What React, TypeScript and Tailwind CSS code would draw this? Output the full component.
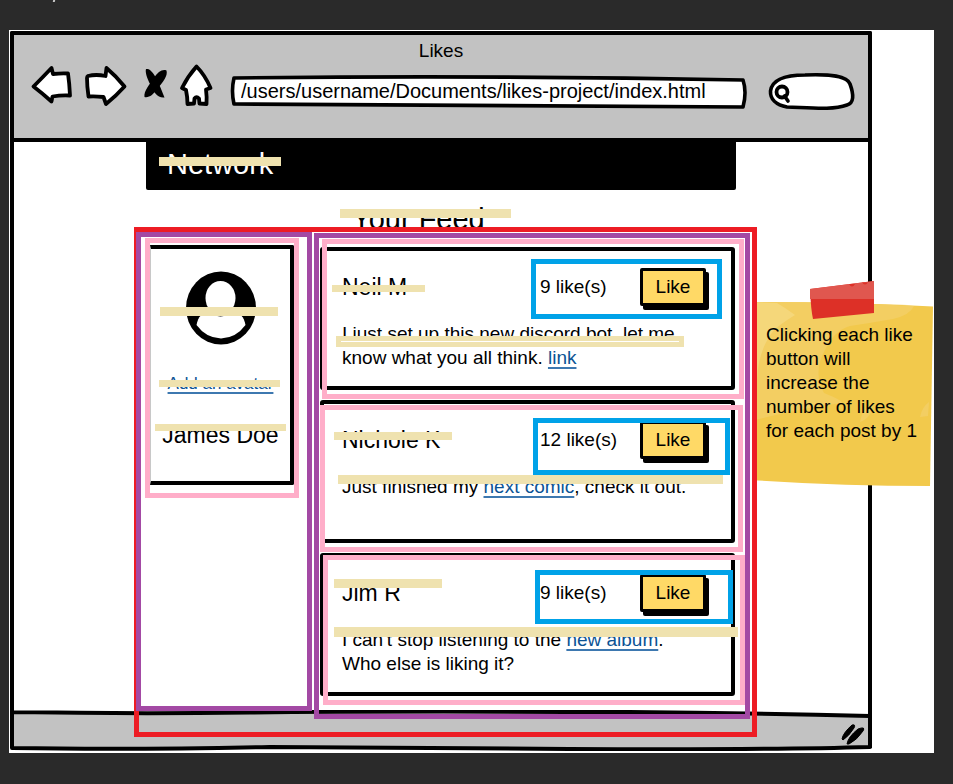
import { useState, type ReactNode } from "react";

const mark = "pointer-events-none absolute z-20 bg-[#efe2af]";
const frame = "pointer-events-none absolute z-20 border-[5px]";
const link = "text-[#0b5394] underline decoration-2 underline-offset-[3px] decoration-[#3d78b0]";

type PostProps = {
  name: string;
  likes: number;
  pinkFrame: string;
  blueFrame: string;
  nameMark: string;
  textMark: ReactNode;
  children: ReactNode;
};

function Post({ name, likes, pinkFrame, blueFrame, nameMark, textMark, children }: PostProps) {
  const [count, setCount] = useState(likes);
  return (
    <article className="relative h-[143px] rounded-[3px] border-4 border-black bg-white pt-[17px] pr-[25px] pl-[18px]">
      <div className="flex h-[38px] items-center">
        <h2 className="flex-1 text-[23px] leading-7">{name}</h2>
        <p className="w-[100px] text-[19px] leading-6">{count} like(s)</p>
        <button
          type="button"
          onClick={() => setCount(count + 1)}
          className="h-[38px] w-[66px] rounded-[2px] border-[3px] border-black bg-[#ffd966] text-[19px] leading-6 shadow-[3px_4px_0_#000]"
        >
          Like
        </button>
      </div>
      <p className="mt-4 text-[19px] leading-6">{children}</p>
      <div className={`${mark} ${nameMark}`} />
      {textMark}
      <div className={`${frame} border-[#ffaec9] ${pinkFrame}`} />
      <div className={`${frame} border-[#00a2e8] ${blueFrame}`} />
    </article>
  );
}

function Toolbar() {
  return (
    <header className="h-[107px] border-b-4 border-black bg-[#c2c2c2] pt-1">
      <p className="text-center text-[19px] leading-6">Likes</p>
      <div className="flex h-12 pr-[10px] pl-4">
        <button type="button" aria-label="Back" className="h-12 w-11">
          <svg viewBox="30 63 44 48" className="h-12 w-11" fill="#fff" stroke="#000" strokeWidth="3.8" strokeLinejoin="round">
            <path d="M33.5 86.5 Q43 77 51.5 68 L53 74 Q62 73 68 73.5 Q69.5 84 70 95.5 Q61 95 52.5 96.5 L51.5 101.5 Q42 93 33.5 86.5Z" />
          </svg>
        </button>
        <button type="button" aria-label="Forward" className="ml-[9px] h-12 w-11">
          <svg viewBox="83 63 44 48" className="h-12 w-11" fill="#fff" stroke="#000" strokeWidth="3.8" strokeLinejoin="round">
            <path d="M88 76 Q96 74 105.5 76 L106.5 68 Q116 76 124.5 86.5 Q116 96 106 104 L103.5 97 Q95 96 88.5 96.5 Q87 86 87 78 Q87 76.5 88 76Z" />
          </svg>
        </button>
        <button type="button" aria-label="Stop" className="ml-[15px] h-12 w-7">
          <svg viewBox="142 63 28 48" className="h-12 w-7">
            <path d="M146 69 C151 68 156 75 164.500 97.500 C158 98.500 153 92 150 84 C147 78 145 72 146 69Z" />
            <path d="M166.500 70.500 C168 76 163 82 158 88 C153 95 149 98 144.500 97 C143.500 91 150 84 154 78 C158 72 162 69 166.500 70.500Z" />
          </svg>
        </button>
        <button type="button" aria-label="Home" className="ml-2 h-12 w-9">
          <svg viewBox="178 63 36 48" className="h-12 w-9" fill="#fff" stroke="#000" strokeWidth="3.8" strokeLinejoin="round">
            <path d="M196.5 66.5 Q205 75 210.5 88 L206 89.5 Q207 97 206.5 104 L199.5 103.5 L199 98.5 Q196.5 96 194.5 98.5 L194 103.5 L187.5 104 Q187.5 97 186 90 L182 88 Q188 76 196.5 66.5Z" />
          </svg>
        </button>
        <div className="relative ml-[15px] h-12 min-w-0 flex-1">
          <svg viewBox="0 0 521 48" preserveAspectRatio="none" className="absolute inset-0 h-full w-full" fill="#fff" stroke="#000" strokeWidth="3.6" strokeLinejoin="round">
            <path d="M5 15 Q260 12 515 17 Q519 29 515 44 Q260 42 5 41 Q2 28 5 15Z" />
          </svg>
          <input
            aria-label="Address"
            defaultValue="/users/username/Documents/likes-project/index.html"
            className="relative mt-4 h-6 w-full bg-transparent pl-3 text-[20px] leading-6 outline-none"
          />
        </div>
        <div className="relative ml-[17px] h-12 w-[92px]">
          <svg viewBox="767 63 92 48" className="absolute inset-0 h-full w-full" fill="#fff" stroke="#000" strokeWidth="3.6">
            <path d="M771.5 91 C773 80 785 75 806 75 C832 74 848 76 851 84 C855 95 855 103 848 105 C834 110 815 108 788 107 C777 105 771 99 771.5 91Z" />
            <circle cx="783" cy="92" r="5.5" strokeWidth="3.8" />
            <path d="M785.5 96 L789 101" strokeLinecap="round" />
          </svg>
          <input aria-label="Search" className="relative mt-4 ml-7 h-6 w-14 bg-transparent outline-none" />
        </div>
      </div>
    </header>
  );
}

function Profile() {
  return (
    <aside className="relative h-[240px] w-[144px] shrink-0 rounded-r-[2px] border-y-4 border-r-4 border-l border-y-black border-r-black border-l-[#c8c8c8] bg-white text-center">
      <svg viewBox="0 0 70 74" className="mx-auto mt-[22px] h-[74px] w-[70px]" role="img" aria-label="Avatar">
        <ellipse cx="35" cy="37" rx="35" ry="36.5" />
        <path d="M10.5 54 C12 46 16 41 24 41 H46 C54 41 58 46 59.5 54 Q50 67 35 67.5 Q20 67 10.5 54Z" fill="#fff" />
        <ellipse cx="34.5" cy="27" rx="17" ry="18.5" />
        <ellipse cx="34.5" cy="27" rx="15" ry="17" fill="#fff" />
      </svg>
      <a href="#avatar" className={`mt-[27px] block text-[17px] leading-6 ${link}`}>Add an avatar</a>
      <p className="mt-[25px] text-[23px] leading-7">James Doe</p>
      <div className={`${mark} top-[58px] left-[9px] h-[9px] w-[118px]`} />
      <div className={`${mark} top-[131px] left-[8px] h-[7px] w-[121px]`} />
      <div className={`${mark} top-[175px] left-[4px] h-[7px] w-[131px]`} />
      <div className={`${frame} -top-[11px] -right-[9px] -bottom-[17px] -left-[6px] border-[#ffaec9]`} />
    </aside>
  );
}

function StickyNote() {
  return (
    <aside className="absolute top-[250px] right-0 z-10 h-[207px] w-[182px]">
      <svg viewBox="752 280 182 207" className="absolute inset-0 h-full w-full">
        <path d="M752 302 Q845 302 933 306.5 L930 486 Q840 486 752 480Z" fill="#f2c94c" />
        <path d="M752 302 Q840 302 914 306 Q910 315 893 319 Q870 323 850 326 Q835 330 826 348 Q812 372 824 393 Q842 400 842 403 Q800 408 752 421Z" fill="#f3ce62" />
        <path d="M752 302 L777 303 Q787 309 795 315 Q782 323 774 330 Q758 350 757 380 L752 395Z" fill="#f5d77a" />
        <path d="M860 422 Q862 409 873 403 Q872 418 860 422Z M920 417 Q922 407 929 402 L928 416Z" fill="#f3ce62" />
        <path d="M810 289 L874 281 L874 313 L813 319 Q811 311 810 289Z" fill="#dd3027" />
        <path d="M810 289 L874 281 L874 299 L810 299Z" fill="#e0574f" />
        <path d="M849 284 h6 q-3 5 -6 0Z M862 282.5 h6 q-3 4 -6 0Z" fill="#dd3027" />
      </svg>
      <p className="relative pt-[43px] pl-[14px] text-[19px] leading-6">
        Clicking each like
        <br />
        button will
        <br />
        increase the
        <br />
        number of likes
        <br />
        for each post by 1
      </p>
    </aside>
  );
}

export default function App() {
  return (
    <div className="min-h-screen bg-[#2a2a2a] pr-[19px] pb-[31px] pl-[9px] font-['Liberation_Sans',Arial,sans-serif] text-black">
      <div className="h-[30px]">
        <div className="ml-[44px] h-[2px] w-[2px] -skew-x-12 bg-[#c8c8c8]" />
      </div>
      <div className="relative bg-white pt-px pr-[62px] pb-[2px] pl-px">
        <div className="rounded-t-[2px] border-x-4 border-t-4 border-black">
          <Toolbar />
          <main className="h-[568px] px-[132px]">
            <div className="relative flex h-12 items-center rounded-b-[2px] bg-black pb-1 pl-[21px]">
              <p className="text-[29px] leading-9 text-white">Network</p>
              <div className={`${mark} top-[15px] left-[13px] h-[9px] w-[122px]`} />
            </div>
            <div className="relative h-[55px] pt-[11px] pl-[206px]">
              <h1 className="text-[29px] leading-9">Your Feed</h1>
              <div className={`${mark} top-[19px] left-[194px] h-[9px] w-[171px]`} />
            </div>
            <div className="relative flex items-start gap-[26px] pr-px pl-1">
              <Profile />
              <section className="flex min-w-0 flex-1 flex-col gap-[10px] pt-[2px]">
                <Post
                  name="Neil M"
                  likes={9}
                  pinkFrame="-top-[12px] -right-[13px] -bottom-[13px] -left-[2px]"
                  blueFrame="top-[8px] right-[9px] h-[60px] w-[191px]"
                  nameMark="top-[34px] left-[8px] h-[7px] w-[93px]"
                  textMark={
                    <div className={`${frame} top-[85px] right-[47px] left-[12px] h-[11px] border-[#efe2af] bg-white`} />
                  }
                >
                  I just set up this new discord bot, let me know what you all think.{" "}
                  <a href="#link" className={link}>link</a>
                </Post>
                <Post
                  name="Nichole K"
                  likes={12}
                  pinkFrame="top-px -right-[12px] -bottom-[13px] -left-[4px]"
                  blueFrame="top-[14px] right-px h-[57px] w-[197px]"
                  nameMark="top-[28px] left-[10px] h-[8px] w-[118px]"
                  textMark={<div className={`${mark} top-[71px] right-[8px] left-[14px] h-[9px]`} />}
                >
                  Just finished my <a href="#comic" className={link}>next comic</a>, check it out.
                </Post>
                <Post
                  name="Jim R"
                  likes={9}
                  pinkFrame="-top-[2px] -right-[14px] -bottom-[13px] -left-px"
                  blueFrame="top-[13px] -right-[2px] h-[54px] w-[198px]"
                  nameMark="top-[22px] left-[10px] h-[9px] w-[108px]"
                  textMark={<div className={`${mark} top-[70px] -right-[7px] left-[10px] h-[10px]`} />}
                >
                  I can't stop listening to the <a href="#album" className={link}>new album</a>.
                  <br />
                  Who else is liking it?
                </Post>
              </section>
              <div className={`${frame} -top-[18px] -right-[21px] -left-[12px] h-[510px] border-[#ed1c24]`} />
              <div className={`${frame} -top-[13px] -left-[10px] h-[479px] w-[176px] border-[#a349a4]`} />
              <div className={`${frame} -top-[12px] -right-[14px] left-[168px] h-[486px] border-[#a349a4]`} />
            </div>
          </main>
        </div>
        <footer className="relative flex h-[41px] items-center justify-end pr-[6px]">
          <svg viewBox="0 0 863 41" preserveAspectRatio="none" className="absolute inset-0 h-full w-full" fill="#c2c2c2" stroke="#000" strokeWidth="4" strokeLinejoin="round">
            <path d="M2 0 V2 Q120 4 240 2.5 T620 2 Q740 3 861 6 V37 Q760 40 560 39 T260 37 Q120 40 2 38Z" />
            <path d="M861 0 V38" />
          </svg>
          <svg viewBox="0 0 26 24" className="relative mt-[6px] h-6 w-[26px]">
            <path d="M2 17 Q3 11 12 3 Q16 2 14 6 Q9 14 3 18Z M7 22 Q8 15 18 7 Q26 4 23 9 Q17 18 9 22Z" stroke="#000" />
          </svg>
        </footer>
        <StickyNote />
      </div>
    </div>
  );
}
